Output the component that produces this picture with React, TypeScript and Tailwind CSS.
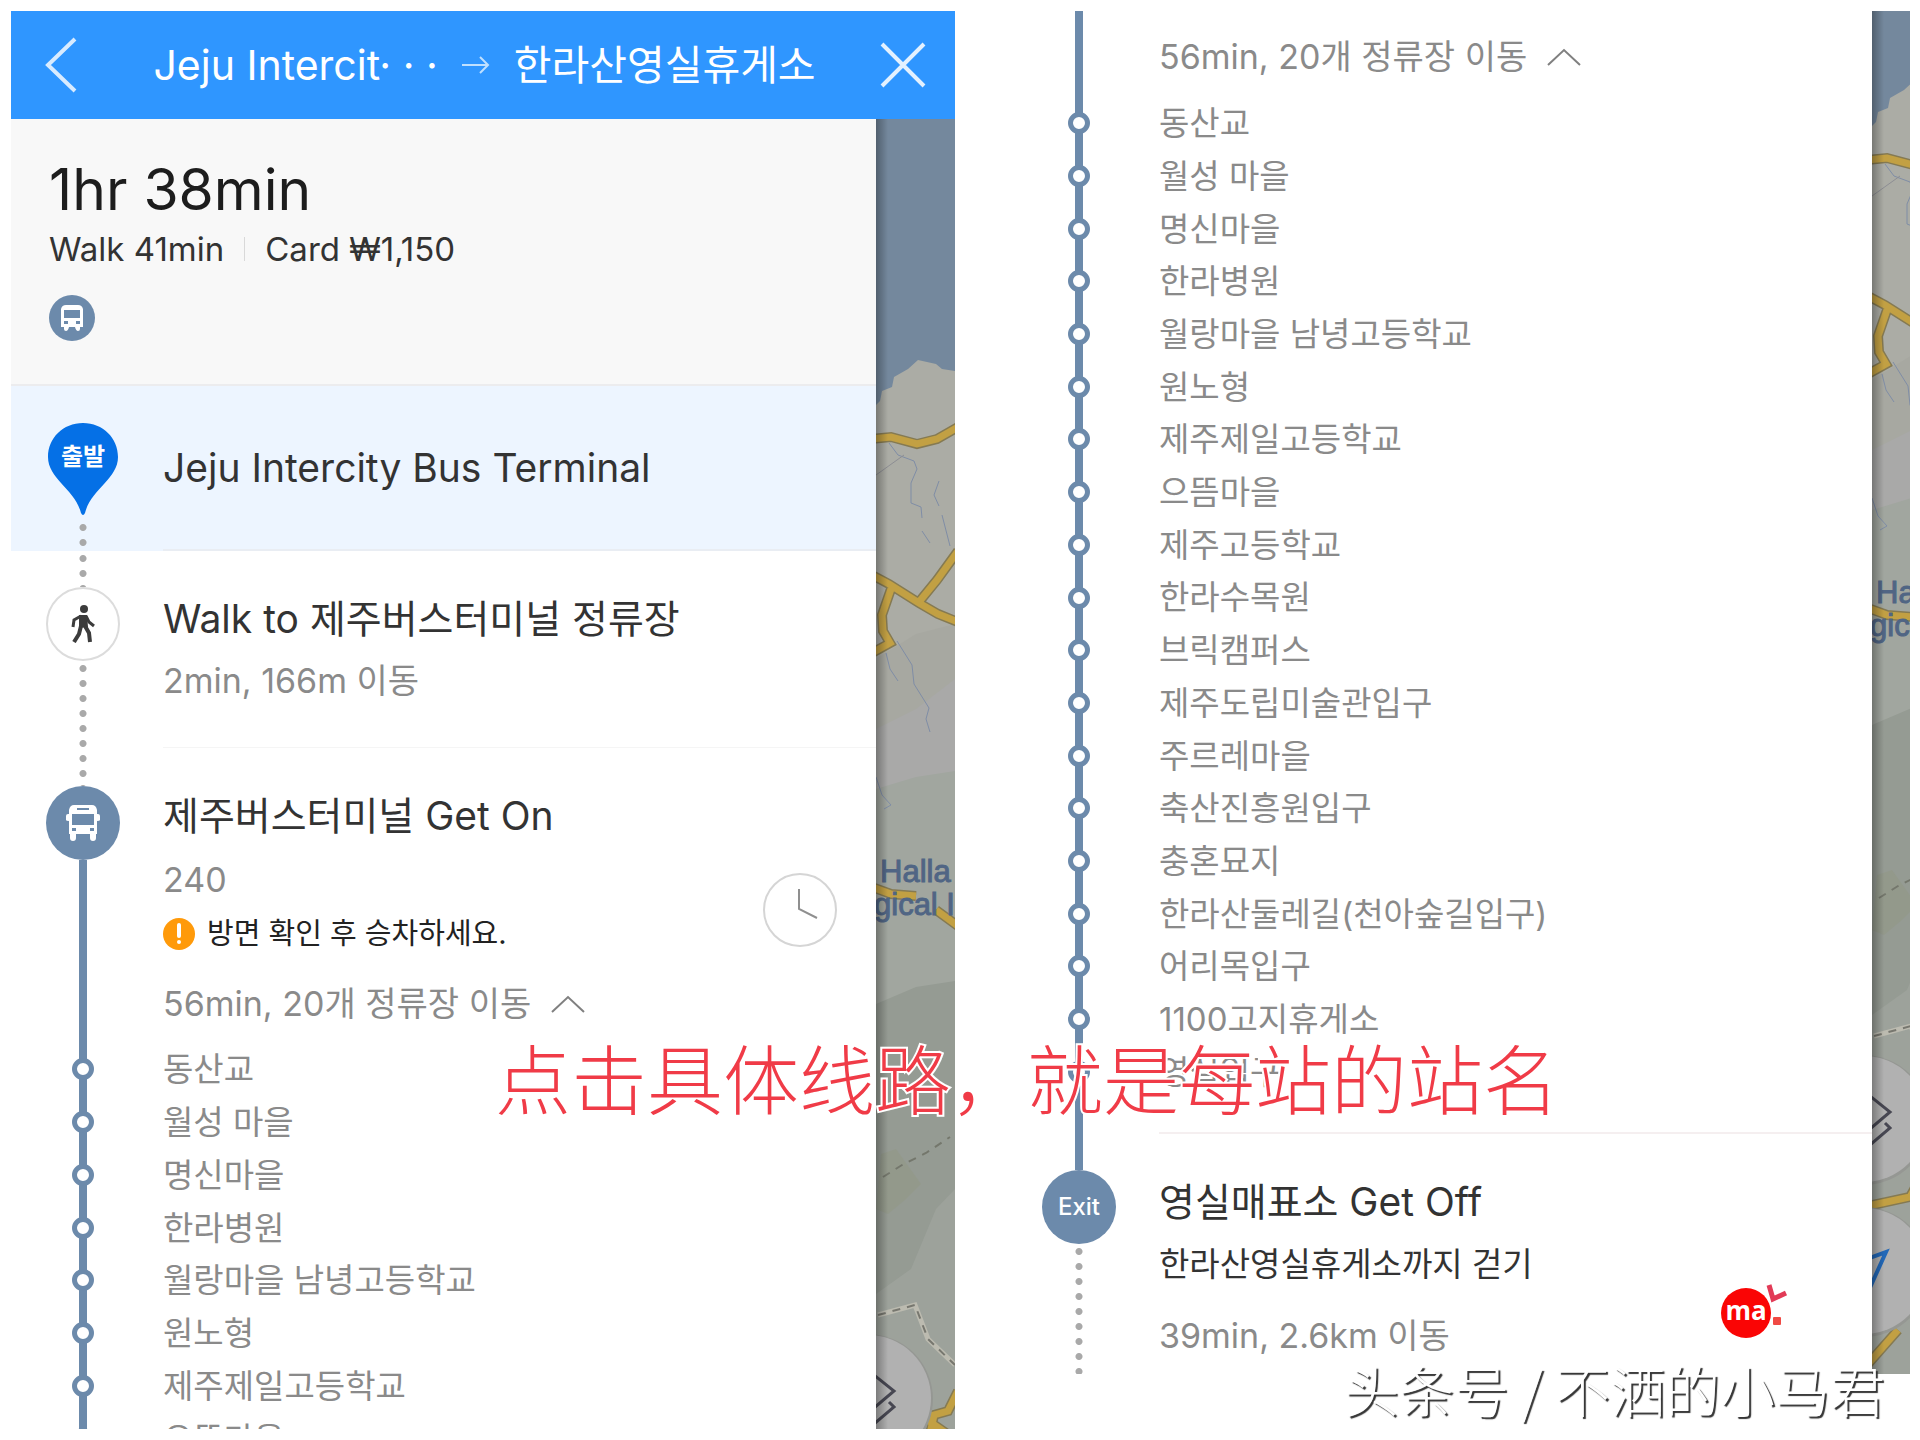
import type { ReactNode } from "react"

const STOPS = [
    "동산교",
    "월성 마을",
    "명신마을",
    "한라병원",
    "월랑마을 남녕고등학교",
    "원노형",
    "제주제일고등학교",
    "으뜸마을",
    "제주고등학교",
    "한라수목원",
    "브릭캠퍼스",
    "제주도립미술관입구",
    "주르레마을",
    "축산진흥원입구",
    "충혼묘지",
    "한라산둘레길(천아숲길입구)",
    "어리목입구",
    "1100고지휴게소",
    "영실입구",
]

const ROAD = "M-4 320 L15 318 L41 325 L61 320 L82 308 M-4 456 L13 465 L43 484 L62 495 L82 503 M43 483 L61 461 L82 432 M15 470 L6 496 L7 512 L14 524 L-4 534 M-4 768 L15 775 L40 777 M60 791 L82 807 M-4 1366 L38 1357 L50 1335 L58 1296 L72 1292 L82 1272 M50 1300 L70 1314 M-4 1524 L26 1490"

function Map({ className }: { className: string }) {
    return (
        <div className="relative h-full overflow-hidden bg-[#abaca5]">
            <div className={`absolute left-0 ${className}`}>
                <svg width="79" height="1600" viewBox="0 0 79 1600" fill="none" aria-hidden="true">
                    <rect width="79" height="1600" fill="#abaca5" />
                    <path d="M0 0 H79 V252 L66 250 L60 245 L42 241 L32 250 L18 258 L16 268 L6 272 L4 282 L0 286 Z" fill="#74889d" />
                    <path d="M0 540 L40 515 L79 505 V660 H0 Z" fill="#a7a8a1" />
                    <path d="M0 610 L40 590 L79 560 V700 H0 Z" fill="#a9a9a8" />
                    <path d="M0 670 L40 658 L79 652 V1600 H0 Z" fill="#a1a69f" />
                    <path d="M0 885 L40 868 L79 862 V1600 H0 Z" fill="#959b93" />
                    <path d="M5 1035 L20 1030 L45 1065 L30 1080 L12 1095 L0 1090 Z" fill="#93998b" />
                    <path d="M0 1175 L35 1150 L60 1090 L79 1070 V1600 H0 Z" fill="#9da29b" />
                    <path d="M13 324 L22 336 L38 342 L41 350 L35 364 L35 384 L45 388 L46 399 M63 362 L58 376 L63 387 M66 396 L74 427 M46 412 L54 424 M21 522 L36 546 L38 565 L53 589 L50 600 L54 613 M10 534 L14 550 L22 562 M0 658 L6 676 L15 686 L8 690" stroke="#7f8da6" />
                    <path d="M0 356 L28 336" stroke="#8d8e94" />
                    <path d={ROAD} stroke="#857a52" strokeWidth="10" />
                    <path d={ROAD} stroke="#c2a043" strokeWidth="7" />
                    <path d="M7 1058 L26 1046 L50 1034 L74 1018" stroke="#74776c" strokeWidth="2" strokeDasharray="8 7" />
                    <path d="M2 1196 L39 1186 L52 1220 L79 1246" stroke="#bcbbb0" strokeWidth="5" />
                    <path d="M2 1196 L39 1186 L52 1220 L79 1246" stroke="#77776f" strokeWidth="2" strokeDasharray="8 7" />
                    <circle cx="-8" cy="1280" r="65" fill="#959793" />
                    <circle cx="-8" cy="1279" r="63" fill="#b1b1b1" />
                    <circle cx="-8" cy="1432" r="65" fill="#959793" />
                    <circle cx="-8" cy="1431" r="63" fill="#b1b1b1" />
                    <path d="M-2 1256 L18 1272 L-2 1289 M13 1283 L18 1288 L-2 1305" stroke="#474752" strokeWidth="3" />
                    <path d="M-8 1420 L14 1412 L-4 1452" stroke="#2268b8" strokeWidth="4" />
                </svg>
                <p className="absolute left-1 top-[736px] whitespace-nowrap font-['Liberation_Sans'] text-[31px] leading-[33px] text-[#506584] [-webkit-text-stroke:1px_#506584]">
                    Halla
                </p>
                <p className="absolute -left-0.5 top-[769px] whitespace-nowrap font-['Liberation_Sans'] text-[31px] leading-[33px] text-[#506584] [-webkit-text-stroke:1px_#506584]">
                    gical I
                </p>
            </div>
            <div className="absolute inset-y-0 left-0 w-3 bg-linear-to-r from-black/30 to-transparent" />
        </div>
    )
}

function Dots({ className }: { className: string }) {
    return <div className={`w-2 bg-[radial-gradient(circle,#a9a9a9_3px,transparent_4px)] bg-size-[8px_15px] ${className}`} />
}

function Line({ className }: { className: string }) {
    return <div className={`w-2 bg-[#6c8aab] ${className}`} />
}

function Rail({ children }: { children: ReactNode }) {
    return <div className="flex w-36 shrink-0 flex-col items-center">{children}</div>
}

function Stops({ names, className }: { names: string[]; className: string }) {
    return (
        <ul className={`grid auto-rows-fr ${className}`}>
            {names.map((name) => (
                <li key={name} className="flex gap-2">
                    <Rail>
                        <Line className="flex-1" />
                        <span className="relative -my-0.5 size-[22px] rounded-full border-5 border-[#6c8aab] bg-white" />
                        <Line className="flex-1" />
                    </Rail>
                    <span className="self-center whitespace-nowrap text-[33px] leading-10 text-[#8a8a8a]">{name}</span>
                </li>
            ))}
        </ul>
    )
}

function StopsToggle() {
    return (
        <button type="button" aria-expanded="true" className="flex items-center gap-5 whitespace-nowrap text-[34px] leading-10 text-[#8a8a8a]">
            56min, 20개 정류장 이동
            <svg width="34" height="18" viewBox="0 0 34 18" fill="none" stroke="#808080" strokeWidth="2" aria-hidden="true">
                <path d="M1 17 L17 2 L33 17" />
            </svg>
        </button>
    )
}

function RoutePhone() {
    return (
        <section className="min-w-0">
            <header className="flex h-[108px] items-center bg-[#2f96ff] pl-[34px] pr-[29px] text-white">
                <button type="button" aria-label="Back">
                    <svg width="32" height="56" viewBox="0 0 32 56" fill="none" stroke="#d8ebff" strokeWidth="4">
                        <path d="M30 2 L3 28 L30 54" />
                    </svg>
                </button>
                <h1 className="flex flex-1 items-center justify-center gap-6 whitespace-nowrap pl-3 text-[41px] leading-[48px]">
                    <span>Jeju Intercit· · ·</span>
                    <svg width="28" height="20" viewBox="0 0 28 20" fill="none" stroke="#bfe0ff" strokeWidth="2" aria-hidden="true">
                        <path d="M0 10 H26 M18 2 L26 10 L18 18" />
                    </svg>
                    <span>한라산영실휴게소</span>
                </h1>
                <button type="button" aria-label="Close">
                    <svg width="46" height="46" viewBox="0 0 46 46" fill="none" stroke="#e3f1ff" strokeWidth="4">
                        <path d="M2 2 L44 44 M44 2 L2 44" />
                    </svg>
                </button>
            </header>
            <div className="grid grid-cols-[1fr_79px]">
                <div className="min-w-0">
                    <div className="h-[267px] border-b-2 border-[#ececee] bg-[#f8f8f8] pl-[38px] pt-9">
                        <h2 className="text-[57px] leading-[70px] text-[#1d1d1d]">1hr 38min</h2>
                        <p className="mt-1 flex items-center gap-5 text-[33px] leading-10 text-[#333]">
                            Walk 41min
                            <span className="h-6 w-px bg-[#d9d9d9]" />
                            Card ₩1,150
                        </p>
                        <span className="mt-[26px] flex size-[46px] items-center justify-center rounded-full bg-[#6c8aab]">
                            <svg width="22" height="26" viewBox="0 0 22 26" aria-hidden="true">
                                <path
                                    fill="#fff"
                                    fillRule="evenodd"
                                    d="M5 0 H17 Q21 0 22 4 V22 H19 V24 Q19 26 17 26 Q15 26 14 22 H8 Q7 26 5 26 Q3 26 3 24 V22 H0 V4 Q1 0 5 0 Z M3 5 V13 H19 V5 Z M3 16 V19 H7 V16 Z M15 16 V19 H19 V16 Z"
                                />
                            </svg>
                        </span>
                    </div>

                    <div className="flex h-[165px] gap-2 bg-[#edf5ff]">
                        <Rail>
                            <div className="relative mt-[37px] h-[92px] w-[70px]">
                                <svg width="70" height="92" viewBox="0 0 70 92" aria-hidden="true">
                                    <path d="M35 0 C55 0 70 15 70 34 C70 56 43 66 37 90 Q35 94 33 90 C27 66 0 56 0 34 C0 15 15 0 35 0 Z" fill="#0570e6" />
                                </svg>
                                <span className="absolute inset-x-0 top-4 text-center text-[24px] leading-9 font-bold text-white">출발</span>
                            </div>
                            <Dots className="mt-[5px] flex-1" />
                        </Rail>
                        <div className="flex flex-1 items-center border-b-2 border-[#e9edf3]">
                            <h3 className="whitespace-nowrap text-[39px] leading-[48px] text-[#333]">Jeju Intercity Bus Terminal</h3>
                        </div>
                    </div>

                    <div className="flex h-[197px] gap-2">
                        <Rail>
                            <Dots className="h-9" />
                            <span className="flex size-[74px] items-center justify-center rounded-full border-2 border-[#dcdcdc] bg-white">
                                <svg width="24" height="38" viewBox="0 0 24 38" fill="none" stroke="#3c3c3c" aria-hidden="true">
                                    <circle cx="13" cy="4" r="4" fill="#3c3c3c" stroke="none" />
                                    <path d="M8 10 L16 10 L17 22 L8 23 Z" fill="#3c3c3c" stroke="none" />
                                    <path d="M10 11 L3 15 L2 22 M15 11 L18 17 L23 21" strokeWidth="3" />
                                    <path d="M10 21 L8 29 L3 37 M14 21 L18 28 L19 37" strokeWidth="4" />
                                </svg>
                            </span>
                            <Dots className="flex-1" />
                        </Rail>
                        <div className="flex-1 border-b border-[#f5f5f5] pt-11">
                            <h3 className="whitespace-nowrap text-[39px] leading-[48px] text-[#333]">Walk to 제주버스터미널 정류장</h3>
                            <p className="mt-[18px] whitespace-nowrap text-[34px] leading-10 text-[#8a8a8a]">2min, 166m 이동</p>
                        </div>
                    </div>

                    <div className="flex h-[295px] gap-2">
                        <Rail>
                            <Dots className="h-[38px] bg-position-[0_3px]" />
                            <span className="flex size-[74px] items-center justify-center rounded-full bg-[#6c8aab]">
                                <svg width="34" height="36" viewBox="0 0 34 36" aria-hidden="true">
                                    <path
                                        fill="#fff"
                                        fillRule="evenodd"
                                        d="M8 0 H26 Q30 0 31 5 V9 H32 Q34 9 34 11 V15 Q34 16 31 16 V29 H30 V33 Q30 36 27 36 Q24 36 24 33 V29 H10 V33 Q10 36 7 36 Q4 36 4 33 V29 H3 V16 Q0 16 0 15 V11 Q0 9 2 9 H3 V5 Q4 0 8 0 Z M11 3 V5 H23 V3 Z M6 9 V20 H28 V9 Z M6 23 V26 H10 V23 Z M24 23 V26 H28 V23 Z"
                                    />
                                </svg>
                            </span>
                            <Line className="flex-1" />
                        </Rail>
                        <div className="relative flex-1 pt-11">
                            <h3 className="whitespace-nowrap text-[39px] leading-[48px] text-[#333]">제주버스터미널 Get On</h3>
                            <p className="mt-5 text-[34px] leading-10 text-[#8a8a8a]">240</p>
                            <p className="mt-[14px] flex items-center gap-3 whitespace-nowrap text-[29px] leading-10 text-[#222]">
                                <svg width="32" height="32" viewBox="0 0 32 32" aria-hidden="true">
                                    <circle cx="16" cy="16" r="16" fill="#ff9a0a" />
                                    <path d="M16 7 V18" stroke="#fff" strokeWidth="4" strokeLinecap="round" />
                                    <circle cx="16" cy="24" r="2" fill="#fff" />
                                </svg>
                                방면 확인 후 승차하세요.
                            </p>
                            <div className="mt-[30px]">
                                <StopsToggle />
                            </div>
                            <button type="button" aria-label="Timetable" className="absolute right-[38px] top-[124px]">
                                <svg width="76" height="76" viewBox="0 0 76 76" fill="none">
                                    <circle cx="38" cy="38" r="36" stroke="#d5d5d5" strokeWidth="2" />
                                    <path d="M37 17 V37 L55 46" stroke="#8f8f8f" strokeWidth="2" />
                                </svg>
                            </button>
                        </div>
                    </div>
                    <div className="max-h-[386px] overflow-hidden">
                        <Stops names={STOPS.slice(0, 8)} className="h-[422px]" />
                    </div>
                </div>
                <Map className="top-0" />
            </div>
        </section>
    )
}

function StopsPhone() {
    return (
        <section className="grid min-w-0 grid-cols-[1fr_38px]">
            <div className="min-w-0">
                <div className="flex h-[86px] gap-2">
                    <Rail>
                        <Line className="flex-1" />
                    </Rail>
                    <div className="pt-[26px]">
                        <StopsToggle />
                    </div>
                </div>
                <Stops names={STOPS} className="h-[1001px]" />
                <div className="flex h-9 gap-2">
                    <Rail>
                        <Line className="flex-1" />
                    </Rail>
                    <div className="flex-1 border-b-2 border-[#f5eff0]" />
                </div>
                <div className="relative flex h-60 gap-2">
                    <Rail>
                        <Line className="h-9" />
                        <span className="flex size-[74px] items-center justify-center rounded-full bg-[#6c8aab] text-[24px] leading-8 font-medium text-white">
                            Exit
                        </span>
                        <Dots className="flex-1" />
                    </Rail>
                    <div className="flex-1 pt-11">
                        <h3 className="whitespace-nowrap text-[39px] leading-[48px] text-[#333]">영실매표소 Get Off</h3>
                        <p className="mt-[18px] whitespace-nowrap text-[33px] leading-10 text-[#333]">한라산영실휴게소까지 걷기</p>
                        <p className="mt-8 whitespace-nowrap text-[34px] leading-10 text-[#8a8a8a]">39min, 2.6km 이동</p>
                    </div>
                    <div className="absolute right-[82px] top-[148px] h-[60px] w-[70px]">
                        <svg width="70" height="60" viewBox="0 0 70 60" fill="none" aria-hidden="true">
                            <circle cx="26" cy="31" r="25" fill="#fa0505" />
                            <path d="M49 3 L53 17 L66 11" stroke="#e23b57" strokeWidth="5" />
                            <rect x="53" y="35" width="8" height="8" rx="1" fill="#f04a44" />
                        </svg>
                        <span className="absolute left-0 top-3 w-[52px] text-center font-['Open_Sans'] text-[26px] leading-8 font-bold text-white">ma</span>
                    </div>
                </div>
            </div>
            <Map className="-top-[171px]" />
        </section>
    )
}

export default function App() {
    return (
        <main className="relative grid min-h-screen grid-cols-[944fr_903fr] items-start gap-x-[52px] overflow-hidden bg-white py-[11px] pl-[11px] pr-2.5 font-[Inter,'Noto_Sans_CJK_KR',sans-serif]">
            <RoutePhone />
            <StopsPhone />
            <p className="absolute left-[495px] top-[1021px] whitespace-nowrap font-['Noto_Sans_CJK_SC',sans-serif] text-[76px] leading-[110px] font-light text-[#f03b47] [-webkit-text-stroke:4px_white] [paint-order:stroke]">
                点击具体线路，就是每站的站名
            </p>
            <p className="absolute right-[35px] top-[1348px] whitespace-nowrap font-['Noto_Sans_CJK_SC',sans-serif] text-[55px] leading-[80px] font-light text-white [text-shadow:2px_2px_1px_#333]">
                头条号 / 不洒的小马君
            </p>
        </main>
    )
}
